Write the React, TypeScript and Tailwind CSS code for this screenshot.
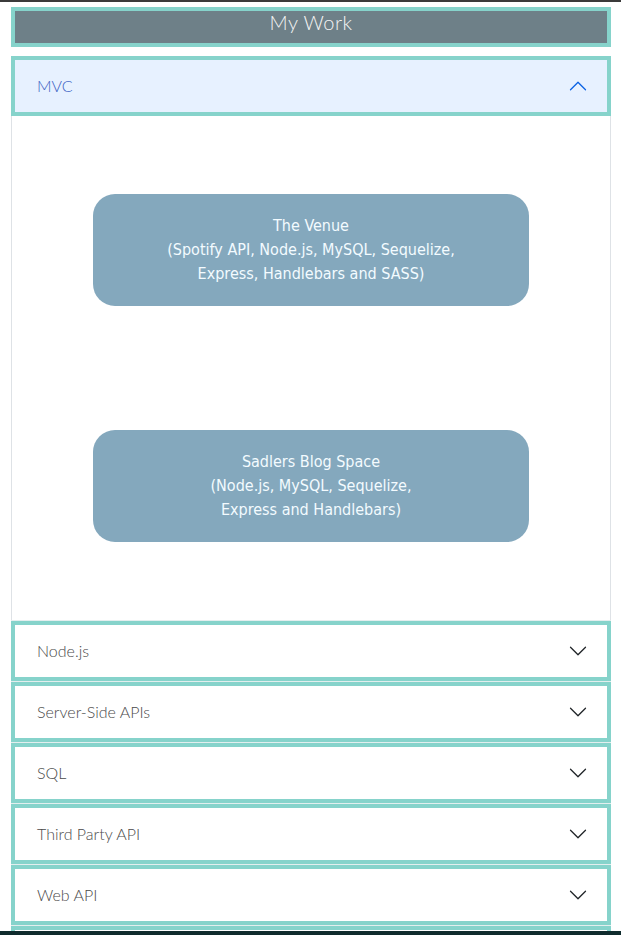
import React, { useState } from "react";

const projects = [
  {
    title: "The Venue",
    lines: ["(Spotify API, Node.js, MySQL, Sequelize,", "Express, Handlebars and SASS)"],
  },
  {
    title: "Sadlers Blog Space",
    lines: ["(Node.js, MySQL, Sequelize,", "Express and Handlebars)"],
  },
];

const sections = ["MVC", "Node.js", "Server-Side APIs", "SQL", "Third Party API", "Web API", "JavaScript"];

function Chevron({ up }: { up?: boolean }) {
  return (
    <svg
      viewBox="0 0 16 16"
      className={`w-5 h-5 shrink-0 ${up ? "rotate-180 text-[#0c63e4]" : "text-[#212529]"}`}
      fill="currentColor"
    >
      <path d="M1.646 4.646a.5.5 0 0 1 .708 0L8 10.293l5.646-5.647a.5.5 0 0 1 .708.708l-6 6a.5.5 0 0 1-.708 0l-6-6a.5.5 0 0 1 0-.708z" />
    </svg>
  );
}

export default function App() {
  const [open, setOpen] = useState("MVC");

  return (
    <div className="min-h-screen bg-white font-['Lato',sans-serif]">
      {/* Top edge of nav */}
      <div className="h-[2px] bg-[#3b3b3b]" />

      <div className="ml-[11px] mr-[10px] pt-[5px]">
        {/* Title */}
        <div className="h-[40px] border-4 border-[#86d3cb] bg-[#6e8088] flex items-start justify-center">
          <h2 className="text-[#f4f4f4] text-[20px] font-light leading-[22px] tracking-wide">My Work</h2>
        </div>

        {/* Accordion */}
        <div className="mt-[9px]">
          {sections.map((name) => {
            const isOpen = open === name;
            return (
              <div key={name} className="border-b border-[#e3eeee]">
                <button
                  onClick={() => setOpen(isOpen ? "" : name)}
                  className={`w-full h-[60px] border-4 border-[#86d3cb] flex items-center justify-between pl-[22px] pr-[19px] text-[16px] font-light ${
                    isOpen ? "bg-[#e7f1ff] text-[#3d63c4]" : "bg-white text-[#4a4a4a]"
                  }`}
                >
                  <span>{name}</span>
                  <Chevron up={isOpen} />
                </button>
                {isOpen && name === "MVC" && (
                  <div className="border-x border-[#dee2e6] py-[78px] flex flex-col items-center gap-[124px]">
                    {projects.map((p) => (
                      <div
                        key={p.title}
                        className="w-[436px] h-[112px] rounded-[22px] bg-[#84a8bd] flex flex-col items-center justify-center text-center text-[#f3fbff] text-[16px] leading-[24px] font-['DejaVu_Sans_Condensed','DejaVu_Sans',sans-serif]"
                      >
                        <span>{p.title}</span>
                        {p.lines.map((l) => (
                          <span key={l}>{l}</span>
                        ))}
                      </div>
                    ))}
                  </div>
                )}
              </div>
            );
          })}
        </div>
      </div>

      {/* Footer edge */}
      <div className="fixed bottom-0 left-0 right-0 h-[4px] bg-[#0f2b2d]" />
    </div>
  );
}
